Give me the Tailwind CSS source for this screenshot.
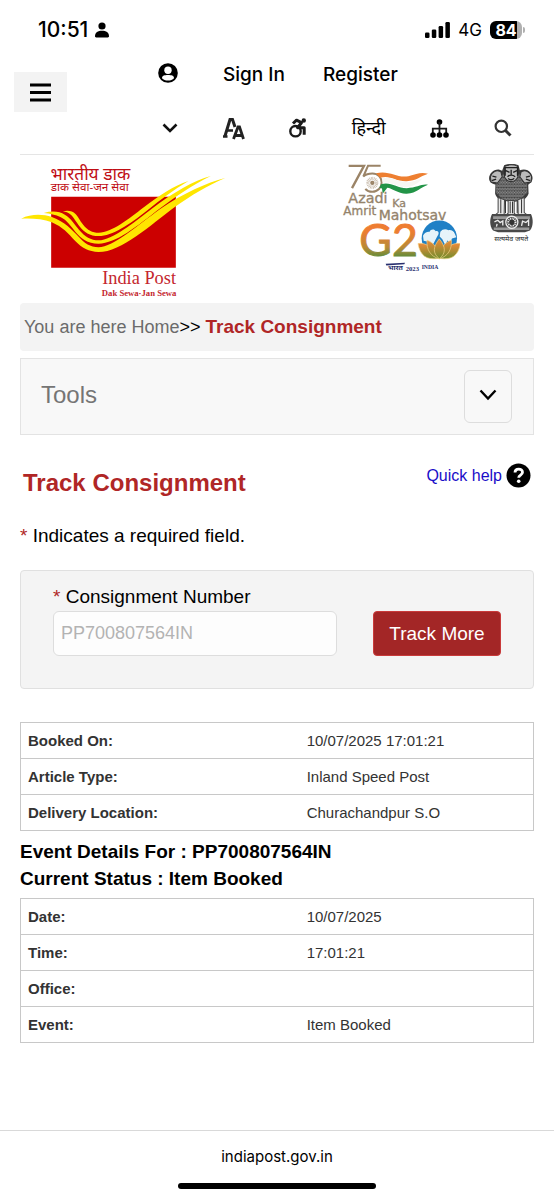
<!DOCTYPE html>
<html lang="en">
<head>
  <meta charset="UTF-8">
  <meta name="viewport" content="width=device-width, initial-scale=1.0">
  <title>Track Consignment</title>
  <script src="https://cdn.jsdelivr.net/npm/@tailwindcss/browser@4"></script>
</head>
<body class="flex min-h-screen flex-col bg-white font-['Liberation_Sans','Noto_Sans',sans-serif] text-lg text-black">

  <!-- Status bar -->
  <div class="flex h-[60px] items-center justify-between pl-[38px] pr-[29px] font-['Inter',sans-serif]">
    <div class="flex items-center gap-[7px]">
      <span class="text-[21px] font-medium">10:51</span>
      <svg class="h-4 w-[14px]" viewBox="0 0 14 16"><circle cx="7" cy="4" r="3.6"/><path d="M0 14.2C0 10.6 3 8.8 7 8.8s7 1.8 7 5.4c0 .7-.5 1.2-1.2 1.2H1.2C.5 15.4 0 14.9 0 14.2Z"/></svg>
    </div>
    <div class="flex items-center gap-2">
      <svg class="h-4 w-[25px]" viewBox="0 0 25 16"><rect y="10.5" width="4.5" height="5.5" rx="1.3"/><rect x="6.8" y="7.5" width="4.5" height="8.5" rx="1.3"/><rect x="13.6" y="4" width="4.5" height="12" rx="1.3"/><rect x="20.4" width="4.5" height="16" rx="1.3"/></svg>
      <span class="text-[17px]">4G</span>
      <div class="flex items-center gap-px">
        <div class="flex h-[18px] w-8 items-center justify-center rounded-md bg-linear-to-r from-black from-84% to-[#b0b0b0] to-84% text-base font-bold text-white">84</div>
        <div class="h-[6px] w-[2px] rounded-r-full bg-[#b0b0b0]"></div>
      </div>
    </div>
  </div>

  <!-- Top navigation -->
  <header class="flex pl-[14px] pr-5">
    <button type="button" aria-label="Menu" class="mt-3 flex h-10 w-[53px] items-center justify-center bg-[#f3f3f3]">
      <svg class="h-[19px] w-[21px]" viewBox="0 0 21 19"><path d="M0 2h21M0 9.500h21M0 17h21" stroke="#000" stroke-width="3.2"/></svg>
    </button>
    <nav class="ml-[91px] flex h-[94px] flex-1 flex-col">
      <div class="flex h-[30px] items-center font-['Inter',sans-serif] text-[19px] font-medium">
        <a href="#" aria-label="Profile" class="-mt-1"><svg class="h-5 w-5" viewBox="0 0 20 20"><circle cx="10" cy="10" r="9.8"/><circle cx="10" cy="7.3" r="3.7" fill="#fff"/><path d="M4 15.200C4 12.600 6.600 12 10 12s6 .6 6 3.200C14.600 16.700 12.500 17.600 10 17.600S5.400 16.700 4 15.200Z" fill="#fff"/></svg></a>
        <a href="#" class="ml-[45px]">Sign In</a>
        <a href="#" class="ml-[38px]">Register</a>
      </div>
      <div class="mt-5 flex h-9 items-center justify-between pl-1 pr-[22px]">
        <button type="button" aria-label="More"><svg class="h-3 w-4" viewBox="0 0 16 12"><path d="M1.500 2.500 8 9l6.500-6.500" fill="none" stroke="#111" stroke-width="2.600"/></svg></button>
        <button type="button" aria-label="Text size"><svg class="h-[23px] w-[22px]" viewBox="0 0 22 23" fill="none" stroke="#222"><path d="M2 19 7 2.500h2.500L12 10" stroke-width="3"/><path d="M0 19.500h4.500M4 13.500h6" stroke-width="2.400"/><path d="M10.500 22 15 10h1.500L20.500 22M12 18.500h7.500" stroke-width="2.800"/></svg></button>
        <button type="button" aria-label="Accessibility"><svg class="h-5 w-[18px]" viewBox="0 0 18 20" fill="none" stroke="#1a1a1a"><circle cx="6.500" cy="13.200" r="5.200" stroke-width="2.400"/><circle cx="14.800" cy="2.500" r="2.200" fill="#1a1a1a" stroke="none"/><path d="M4 5.500 7.500 2.200l5 2.500-4 5h6.700v7" stroke-width="3" stroke-linejoin="round"/></svg></button>
        <a href="#" lang="hi">हिन्दी</a>
        <button type="button" aria-label="Sitemap"><svg class="h-[19px] w-[19px]" viewBox="0 0 19 19"><circle cx="9.500" cy="3" r="2.800"/><path d="M9.500 3v13M2.800 16v-6.300h13.400V16" fill="none" stroke="#1a1a1a" stroke-width="1.800"/><circle cx="3" cy="16" r="2.800"/><circle cx="9.500" cy="16" r="2.800"/><circle cx="16" cy="16" r="2.800"/></svg></button>
        <button type="button" aria-label="Search"><svg class="h-[18px] w-[18px]" viewBox="0 0 18 18" fill="none" stroke="#333"><circle cx="7.300" cy="7.300" r="5.700" stroke-width="2.200"/><path d="m11.500 11.500 5 5" stroke-width="3"/></svg></button>
      </div>
    </nav>
  </header>

  <main class="mx-5 flex-1 border-t border-[#e5e5e5]">

    <!-- Logos -->
    <div class="flex h-[148px] items-start">
      <svg class="h-[145px] w-[207px]" viewBox="30 15 620 435" role="img" aria-label="India Post">
        <g fill="#c00d14" font-family="'Noto Sans', 'Noto Serif Devanagari', serif">
          <text x="121" y="90" font-size="52">भारतीय डाक</text>
          <text x="122" y="124" font-size="35">डाक सेवा-जन सेवा</text>
        </g>
        <path d="M123 140h374v213H123z" fill="#cc0000"/>
        <g fill="#ffe600">
          <path d="M33 206C62 191 98 192 125 201 165 216 184 238 207 262 222 279 240 292 265 292 310 291 384 224 450 177 520 129 590 98 645 84 590 108 545 135 495 170 420 225 335 306 265 306 236 305 215 294 196 274 172 248 158 232 125 217 98 206 65 205 33 206Z"/>
          <path d="M101 189C125 182 148 184 164 194 184 206 192 222 207 240 224 260 242 271 265 271 308 270 368 219 425 176 490 127 550 92 602 78 545 106 500 137 450 175 380 229 318 281 265 281 232 281 212 265 196 246 180 226 170 211 152 202 136 194 120 191 101 189Z"/>
          <path d="M158 184C174 180 187 183 196 192 206 202 208 211 219 224 232 240 246 248 266 248 305 247 353 209 402 171 448 136 490 108 535 93 490 119 452 149 410 182 358 223 306 258 266 258 238 258 222 246 209 230 196 213 191 202 182 194 174 187 167 186 158 184Z"/>
        </g>
        <g fill="#c4262e" font-family="'Liberation Serif', serif">
          <text x="276" y="403" font-size="55">India Post</text>
          <text x="275" y="437" font-size="26" font-weight="bold">Dak Sewa·Jan Sewa</text>
        </g>
      </svg>
      <svg class="ml-auto mt-[7px] h-28 w-[120px]" viewBox="30 35 360 335" role="img" aria-label="Azadi Ka Amrit Mahotsav, G20">
        <defs>
          <linearGradient id="g20" x1="0" y1="0" x2="0" y2="1"><stop offset=".35" stop-color="#ee7d32"/><stop offset=".65" stop-color="#b98a35"/><stop offset=".9" stop-color="#3d8c3c"/></linearGradient>
          <linearGradient id="petal" x1="0" y1="0" x2="0" y2="1"><stop offset="0" stop-color="#f08a3a"/><stop offset="1" stop-color="#6f8d2d"/></linearGradient>
        </defs>
        <g fill="none" stroke="#9b8467" stroke-width="7">
          <path d="M56 46h46L66 113"/>
          <path d="M152 46h-38L100 78c8-7 17-9 27-9 17 0 28 12 28 27s-12 28-28 28c-9 0-17-4-21-9" stroke-width="6"/>
          <circle cx="127" cy="97" r="13" stroke-dasharray="2 2" stroke-width="10" opacity=".6"/>
          <circle cx="127" cy="97" r="3"/>
        </g>
        <path d="M138 68C180 58 200 84 235 77 262 69 275 64 294 70 268 79 260 91 230 92 195 93 180 72 150 82Z" fill="#ee7f31"/>
        <path d="M156 84C185 75 200 95 232 95 250 95 262 87 277 84 262 101 245 111 222 110 195 107 180 92 158 97Z" fill="#f7f7f2"/>
        <path d="M153 101C182 92 200 113 230 113 262 112 275 99 294 103 270 111 262 128 230 130 205 131 185 112 172 112L158 130 156 114 148 112Z" fill="#229447"/>
        <g fill="#94836b" font-family="'DejaVu Sans', sans-serif" stroke="#94836b">
          <text x="55" y="158" font-size="43">Azadi</text>
          <text x="187" y="168" font-size="33">Ka</text>
          <text x="40" y="194" font-size="36">Amrit</text>
          <text x="146" y="207" font-size="42">Mahotsav</text>
        </g>
        <text x="88" y="317" font-size="134" font-family="Lato, sans-serif" fill="url(#g20)" stroke="url(#g20)" stroke-width="3">G2</text>
        <circle cx="328" cy="263" r="53" fill="#1f80c6"/>
        <path d="M279 256c4-9 12-13 20-12 2-8 14-10 18-2 7-2 11 4 8 10l-5 9-9 17-8 8-8-12-14-3ZM331 244c7-10 18-9 24-5 9-2 16 3 19 10l5 11-13 4-5 12-9-6-6 14-9-18-8-8Z" fill="#e6f3fa"/>
        <g fill="url(#petal)" stroke="#f3d58a" stroke-width="2">
          <path d="M264 279c25-3 43 10 61 45-36 5-55-9-61-45ZM391 279c-25-3-43 10-61 45 36 5 55-9 61-45Z"/>
          <path d="M291 269c24 9 34 26 36 56-26-8-38-28-36-56ZM364 269c-24 9-34 26-36 56 26-8 38-28 36-56Z"/>
          <path d="M328 265c20 25 20 43 0 60-20-17-20-35 0-60Z"/>
        </g>
        <g fill="#29306f" font-family="'Liberation Serif', serif" font-weight="bold">
          <path d="m167 340 58-3-2 4-54 4Z"/>
          <text x="174" y="359" font-size="21" font-family="'Noto Sans', sans-serif">भारत</text>
          <text x="227" y="360" font-size="20">2023</text>
          <text x="275" y="354" font-size="17">INDIA</text>
        </g>
      </svg>
      <svg class="ml-[27px] mt-[7px] h-[82px] w-[47px]" viewBox="50 35 140 245" role="img" aria-label="State Emblem of India">
        <defs>
          <pattern id="mane" width="8" height="10" patternUnits="userSpaceOnUse"><path d="m0 1 4 6 4-6M0 7l4 3 4-3" fill="none" stroke="#ddd" stroke-width="1.3"/></pattern>
        </defs>
        <path d="M101 45c10-5 33-5 43 0l4 15c10-5 25-3 31 6 9 10 9 24 1 31l-7 6 1 27c-3 10-12 18-26 21l-22 4-26-4c-15-4-24-12-26-22l1-27c-11-1-18-8-19-16-1-16 15-31 31-28l8 3Z" fill="#3c3c3c"/>
        <path d="M77 87 100 70l22 27 24-27 23 18 1 39-22 20-24 6-28-6-19-20Z" fill="url(#mane)"/>
        <g fill="#bbb" stroke="#333" stroke-width="3">
          <path d="M103 48c8-6 30-6 38 0l1 32c-8 18-31 18-40 0Z"/>
          <path d="M60 79c5-16 18-21 31-15l4 15-14 19-19-3ZM183 79c-5-16-18-21-31-15l-4 15 14 19 19-3Z"/>
        </g>
        <path d="M101 52h43M106 61l11 5M139 61l-11 5M122 58v17M111 79c7-6 16-6 23 0M113 84c7 6 12 6 18 0M66 77l12 3M178 77l-12 3M64 91l13-5M179 91l-13-5M104 54v22M141 54v22" fill="none" stroke="#222" stroke-width="4"/>
        <path d="M83 141v45l-9 7h27l1-45Zm30 9v38l-7 6h31l-6-6v-38Zm48-9v45l9 7h-27l-1-45Z" fill="#e8e8e8" stroke="#444" stroke-width="3"/>
        <path d="M91 146v42M119 153v35M126 153v35M153 146v42M105 151v37M140 151v37" stroke="#333" stroke-width="3"/>
        <path d="M65 190h116c8 16 7 37-3 50l-15 5H83l-15-5c-11-14-11-35-3-50Z" fill="#494949"/>
        <path d="M68 197h110v8H68ZM70 231h106v7H70Z" fill="#999"/>
        <g fill="none" stroke="#ececec" stroke-width="4">
          <path d="m72 214 10-5 7 7 8-5v14M78 228l2-8M153 226l3-14 10 4 8-7v17"/>
          <circle cx="124" cy="215" r="18" fill="#333"/>
          <circle cx="124" cy="215" r="11" stroke-dasharray="3 2" stroke-width="6"/>
        </g>
        <text x="122" y="272" text-anchor="middle" font-size="21" font-family="'Noto Sans', sans-serif" fill="#222">सत्यमेव जयते</text>
      </svg>
    </div>

    <!-- Breadcrumb -->
    <nav class="flex h-12 items-center rounded bg-[#f3f3f3] px-1">
      <p><span class="text-[#6b6b6b]">You are here <a href="#">Home</a></span>&gt;&gt; <b class="text-[19px] text-[#b02626]">Track Consignment</b></p>
    </nav>

    <section class="mt-[7px] flex h-[77px] items-center justify-between border border-[#e3e3e3] bg-[#f8f8f8] pl-5 pr-[21px]">
      <h2 class="-mt-1 text-2xl text-[#757575]">Tools</h2>
      <button type="button" aria-label="Expand tools" class="flex h-[53px] w-12 items-center justify-center rounded-md border border-[#ddd] pb-1">
        <svg class="h-3 w-[18px]" viewBox="0 0 18 12"><path d="m1.500 1.500 7.500 8 7.500-8" fill="none" stroke="#000" stroke-width="2.400"/></svg>
      </button>
    </section>

    <div class="mt-7 flex items-start justify-between px-[3px]">
      <h1 class="mt-1 text-2xl font-bold text-[#b02626]">Track Consignment</h1>
      <a href="#" class="flex items-center gap-1 text-base text-[#1a0dc8]">Quick help
        <svg class="h-[25px] w-[25px]" viewBox="0 0 25 25"><circle cx="12.500" cy="12.500" r="12"/><path d="M9 9.500c0-4.500 7.500-4.500 7.500-.2 0 3-3.800 2.700-3.800 5.500" fill="none" stroke="#fff" stroke-width="2.800"/><circle cx="12.700" cy="18.200" r="1.800" fill="#fff"/></svg>
      </a>
    </div>

    <p class="mt-[23px] text-[19px] leading-7"><span class="text-[#b02626]">*</span> Indicates a required field.</p>

    <!-- Search form -->
    <form class="mt-5 flex h-[119px] items-start justify-between rounded-sm border border-[#e0e0e0] bg-[#f4f4f4] px-8 pt-3">
      <div class="w-[284px]">
        <label for="consignment" class="block text-[19px] leading-7"><span class="text-[#b02626]">*</span> Consignment Number</label>
        <input id="consignment" type="text" placeholder="PP700807564IN" class="h-[45px] w-full rounded-md border border-[#ddd] bg-[#fdfdfd] px-[7px] placeholder:text-[#b3b3b3]">
      </div>
      <button type="button" class="mt-7 h-[45px] w-32 rounded border border-[#c93a3a] bg-[#a32626] text-[19px] text-white">Track More</button>
    </form>

    <!-- Booking details -->
    <table class="mt-[33px] w-full table-fixed border-collapse border border-[#c8c8c8] text-left text-[15px] text-[#333]">
      <tr class="h-9 border border-[#c8c8c8]"><th class="w-[55%] px-[7px]">Booked On:</th><td class="px-1">10/07/2025 17:01:21</td></tr>
      <tr class="h-9 border border-[#c8c8c8]"><th class="px-[7px]">Article Type:</th><td class="px-1">Inland Speed Post</td></tr>
      <tr class="h-9 border border-[#c8c8c8]"><th class="px-[7px]">Delivery Location:</th><td class="px-1">Churachandpur S.O</td></tr>
    </table>

    <div class="mt-[7px] text-[19px] font-bold leading-[27px]">
      <h3>Event Details For : PP700807564IN</h3>
      <h3>Current Status : Item Booked</h3>
    </div>

    <table class="mt-[6px] w-full table-fixed border-collapse border border-[#c8c8c8] text-left text-[15px] text-[#333]">
      <tr class="h-9 border border-[#c8c8c8]"><th class="w-[55%] px-[7px]">Date:</th><td class="px-1">10/07/2025</td></tr>
      <tr class="h-9 border border-[#c8c8c8]"><th class="px-[7px]">Time:</th><td class="px-1">17:01:21</td></tr>
      <tr class="h-9 border border-[#c8c8c8]"><th class="px-[7px]">Office:</th><td class="px-1"></td></tr>
      <tr class="h-9 border border-[#c8c8c8]"><th class="px-[7px]">Event:</th><td class="px-1">Item Booked</td></tr>
    </table>
  </main>

  <!-- Browser bar -->
  <footer class="flex h-[70px] flex-col items-center border-t border-[#d9d9d9] pt-[14px] font-['Inter',sans-serif]">
    <p class="text-[15px] leading-6">indiapost.gov.in</p>
    <div class="mt-[14px] h-[6px] w-[198px] rounded-full bg-black"></div>
  </footer>
</body>
</html>
